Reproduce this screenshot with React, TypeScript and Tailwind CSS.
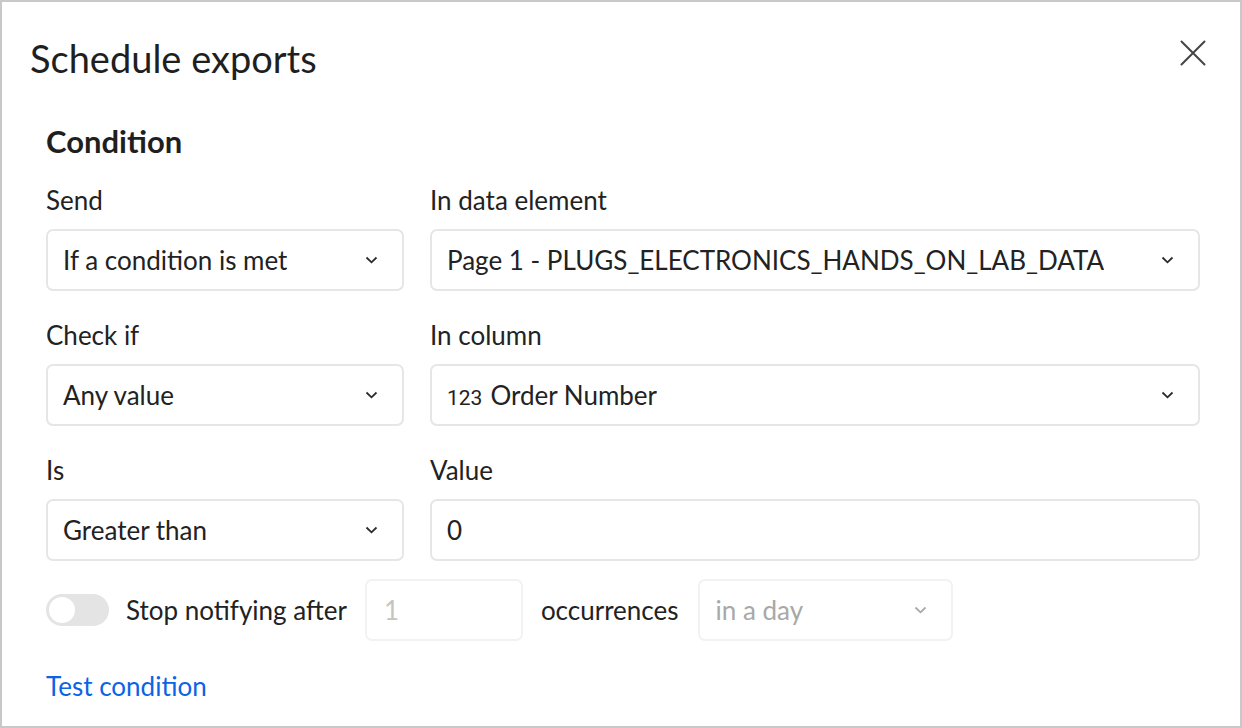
const font = { fontFamily: "Lato, 'Noto Sans', sans-serif" };

function Chevron({ muted }: { muted?: boolean }) {
  return (
    <svg
      width="13"
      height="8"
      viewBox="0 0 13 8"
      fill="none"
      stroke={muted ? "#a8a8a8" : "#2a2a2a"}
      strokeWidth="1.8"
      className="shrink-0"
    >
      <path d="M1.5 1.5 L6.5 6.3 L11.5 1.5" />
    </svg>
  );
}

function CloseIcon() {
  return (
    <svg width="26" height="26" viewBox="0 0 26 26" fill="none" stroke="#444" strokeWidth="2" strokeLinecap="round" className="mt-[6px] shrink-0">
      <path d="M1.5 1.5 L24.5 24.5 M24.5 1.5 L1.5 24.5" />
    </svg>
  );
}

function Select({ children }: { children: React.ReactNode }) {
  return (
    <div className="flex h-[62px] items-center justify-between rounded-[7px] border-2 border-[#e6e6e6] bg-white pl-[15px] pr-[24px] text-[26px] text-[#222]">
      <span className="flex items-baseline truncate">{children}</span>
      <Chevron />
    </div>
  );
}

function Field({ label, children }: { label: string; children: React.ReactNode }) {
  return (
    <div className="flex flex-col">
      <div className="mb-3 h-[34px] text-[26px] leading-[34px] text-[#222]">{label}</div>
      {children}
    </div>
  );
}

export default function App() {
  return (
    <div
      className="box-border h-[728px] w-[1242px] border-2 border-[#c8c8c8] bg-white"
      style={font}
    >
      <div className="flex items-start justify-between pl-[28px] pr-[34px] pt-[32px]">
        <h1 className="h-[48px] text-[38px] leading-[48px] text-[#1f1f1f]">Schedule exports</h1>
        <CloseIcon />
      </div>

      <div className="pl-[44px] pr-[40px]">
        <h2 className="mt-[40px] h-[38px] text-[31px] font-bold leading-[38px] text-[#1f1f1f]">
          Condition
        </h2>

        <div className="mt-[23px] grid grid-cols-[358px_1fr] gap-x-[26px] gap-y-[27px]">
          <Field label="Send">
            <Select>If a condition is met</Select>
          </Field>
          <Field label="In data element">
            <Select>Page 1 - PLUGS_ELECTRONICS_HANDS_ON_LAB_DATA</Select>
          </Field>
          <Field label="Check if">
            <Select>Any value</Select>
          </Field>
          <Field label="In column">
            <Select>
              <span className="mr-[8px] text-[21px]" style={{ fontFamily: "Roboto, sans-serif" }}>
                123
              </span>
              Order Number
            </Select>
          </Field>
          <Field label="Is">
            <Select>Greater than</Select>
          </Field>
          <Field label="Value">
            <div className="flex h-[62px] items-center rounded-[7px] border-2 border-[#e6e6e6] bg-white pl-[15px] text-[26px] text-[#222]">
              0
            </div>
          </Field>
        </div>

        <div className="mt-[18px] flex h-[62px] items-center text-[26px] text-[#222]">
          <div className="relative h-[32px] w-[63px] shrink-0 rounded-full bg-[#e4e4e4]">
            <div className="absolute left-[1px] top-[1px] h-[30px] w-[30px] rounded-full border-2 border-[#e4e4e4] bg-white" />
          </div>
          <span className="ml-[17px]">Stop notifying after</span>
          <div className="ml-[18px] flex h-[62px] w-[158px] items-center rounded-[7px] border-2 border-[#f2f2f2] pl-[17px] text-[#c4c4c4]">
            1
          </div>
          <span className="ml-[18px]">occurrences</span>
          <div className="ml-[19px] flex h-[62px] w-[255px] items-center justify-between rounded-[7px] border-2 border-[#f2f2f2] pl-[16px] pr-[24px] text-[#a8a8a8]">
            in a day
            <Chevron muted />
          </div>
        </div>

        <div className="mt-[28px] h-[34px] text-[26px] leading-[34px] text-[#0b63e5]">
          Test condition
        </div>
      </div>
    </div>
  );
}
